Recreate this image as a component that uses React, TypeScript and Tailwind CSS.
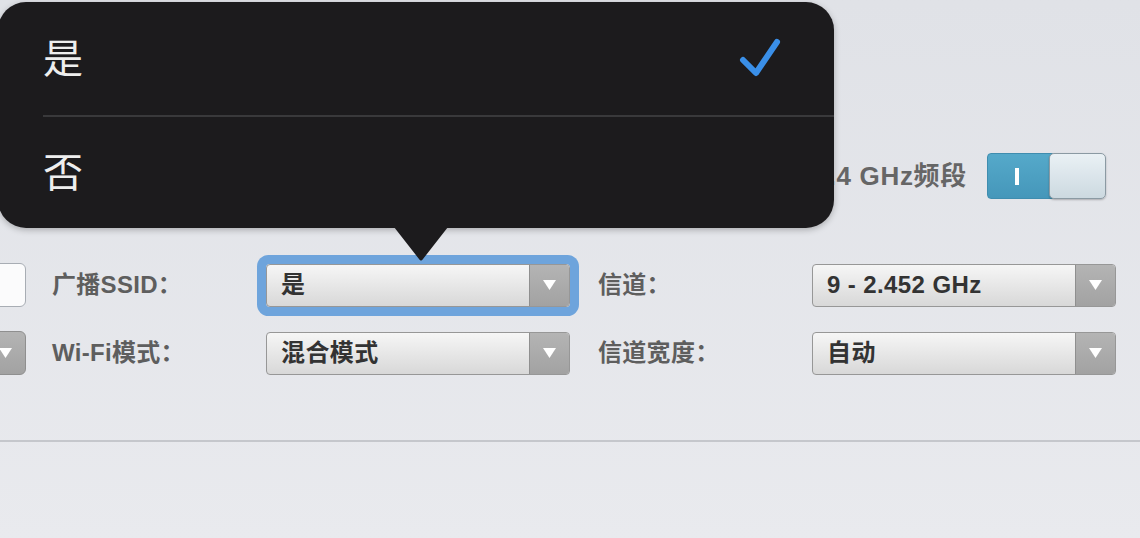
import React from 'react'

const font = { fontFamily: '"Liberation Sans", "Noto Sans CJK SC", sans-serif' }

function Arrow() {
  return (
    <div className="flex h-full w-[40px] shrink-0 items-center justify-center border-l border-[#8f8f8f] bg-gradient-to-b from-[#b4b4b4] to-[#a2a2a2]">
      <svg width="13" height="10" viewBox="0 0 13 10">
        <polygon points="0,0 13,0 6.5,10" fill="#ffffff" />
      </svg>
    </div>
  )
}

function Select({ value, focused }: { value: string; focused?: boolean }) {
  return (
    <div
      className={`flex h-[43px] w-[304px] shrink-0 overflow-hidden rounded-[4px] border border-[#979797] bg-gradient-to-b from-[#f6f6f6] to-[#d8d8d8] ${focused ? 'ring-[9px] ring-[#6ea4dc]' : ''}`}
    >
      <div className="flex flex-1 items-center pl-[14px] text-[24px] font-semibold tracking-[0.4px] text-[#333333]">
        {value}
      </div>
      <Arrow />
    </div>
  )
}

function Label({ children }: { children: React.ReactNode }) {
  return (
    <div className="w-[214px] shrink-0 text-[24px] font-semibold tracking-[0.3px] text-[#5e5e5e]">
      {children}
    </div>
  )
}

function Popover() {
  return (
    <div className="absolute left-[-2px] top-[2px] w-[836px]">
      <div className="h-[226px] rounded-[28px] bg-[#1c1b1d] shadow-[0_2px_6px_rgba(0,0,0,0.25)]">
        <div className="flex h-[113px] items-center justify-between pl-[45px] pr-[52px]">
          <span className="text-[40px] text-[#eeeeee]">是</span>
          <svg width="44" height="44" viewBox="0 0 44 44">
            <polyline
              points="5,23 18,36 39,5"
              fill="none"
              stroke="#3a8fe8"
              strokeWidth="6"
              strokeLinecap="round"
              strokeLinejoin="round"
            />
          </svg>
        </div>
        <div className="ml-[45px] h-[2px] bg-[#39393b]" />
        <div className="flex h-[111px] items-center pl-[45px]">
          <span className="text-[40px] text-[#eeeeee]">否</span>
        </div>
      </div>
      <svg className="ml-[396px] -mt-px" width="54" height="35" viewBox="0 0 54 35">
        <path d="M0,0 L54,0 L29,32 Q27,35 25,32 Z" fill="#1c1b1d" />
      </svg>
    </div>
  )
}

export default function App() {
  return (
    <div
      className="relative h-[538px] w-[1140px] overflow-hidden bg-gradient-to-b from-[#e0e2e7] to-[#e9eaee]"
      style={font}
    >
      <div className="pt-[153px]">
        <div className="flex h-[46px] items-center justify-end gap-[20px] pr-[34px]">
          <span className="text-[26px] font-semibold tracking-[0.7px] text-[#666666]">2.4 GHz频段</span>
          <div className="flex h-[46px] w-[119px]">
            <div className="flex w-[66px] items-center justify-center rounded-l-[4px] border border-[#3f8daf] bg-gradient-to-b from-[#55a9ca] to-[#4597ba] pr-[6px]">
              <div className="h-[17px] w-[4px] bg-white" />
            </div>
            <div className="-ml-[4px] w-[57px] rounded-[5px] border border-[#8b9aa3] bg-gradient-to-b from-[#eaf1f5] to-[#ccd9e0] shadow-[0_1px_2px_rgba(0,0,0,0.25)]" />
          </div>
        </div>

        <div className="mt-[64px] flex flex-col gap-[24px]">
          <div className="flex items-center">
            <div className="-ml-[20px] mr-[26px] h-[44px] w-[46px] rounded-[6px] border border-[#a8adb4] bg-[#fbfbfc]" />
            <Label>广播SSID：</Label>
            <Select value="是" focused />
            <div className="w-[28px]" />
            <Label>信道：</Label>
            <Select value="9 - 2.452 GHz" />
          </div>
          <div className="flex items-center">
            <div className="-ml-[20px] mr-[26px] flex h-[44px] w-[46px] items-center justify-end overflow-hidden rounded-[6px] border border-[#8f8f8f] bg-gradient-to-b from-[#b4b4b4] to-[#a2a2a2] pr-[13px]">
              <svg width="13" height="10" viewBox="0 0 13 10">
                <polygon points="0,0 13,0 6.5,10" fill="#ffffff" />
              </svg>
            </div>
            <Label>Wi-Fi模式：</Label>
            <Select value="混合模式" />
            <div className="w-[28px]" />
            <Label>信道宽度：</Label>
            <Select value="自动" />
          </div>
        </div>

        <div className="mt-[65px] h-[2px] bg-[#c5c7cc]" />
      </div>

      <Popover />
    </div>
  )
}
